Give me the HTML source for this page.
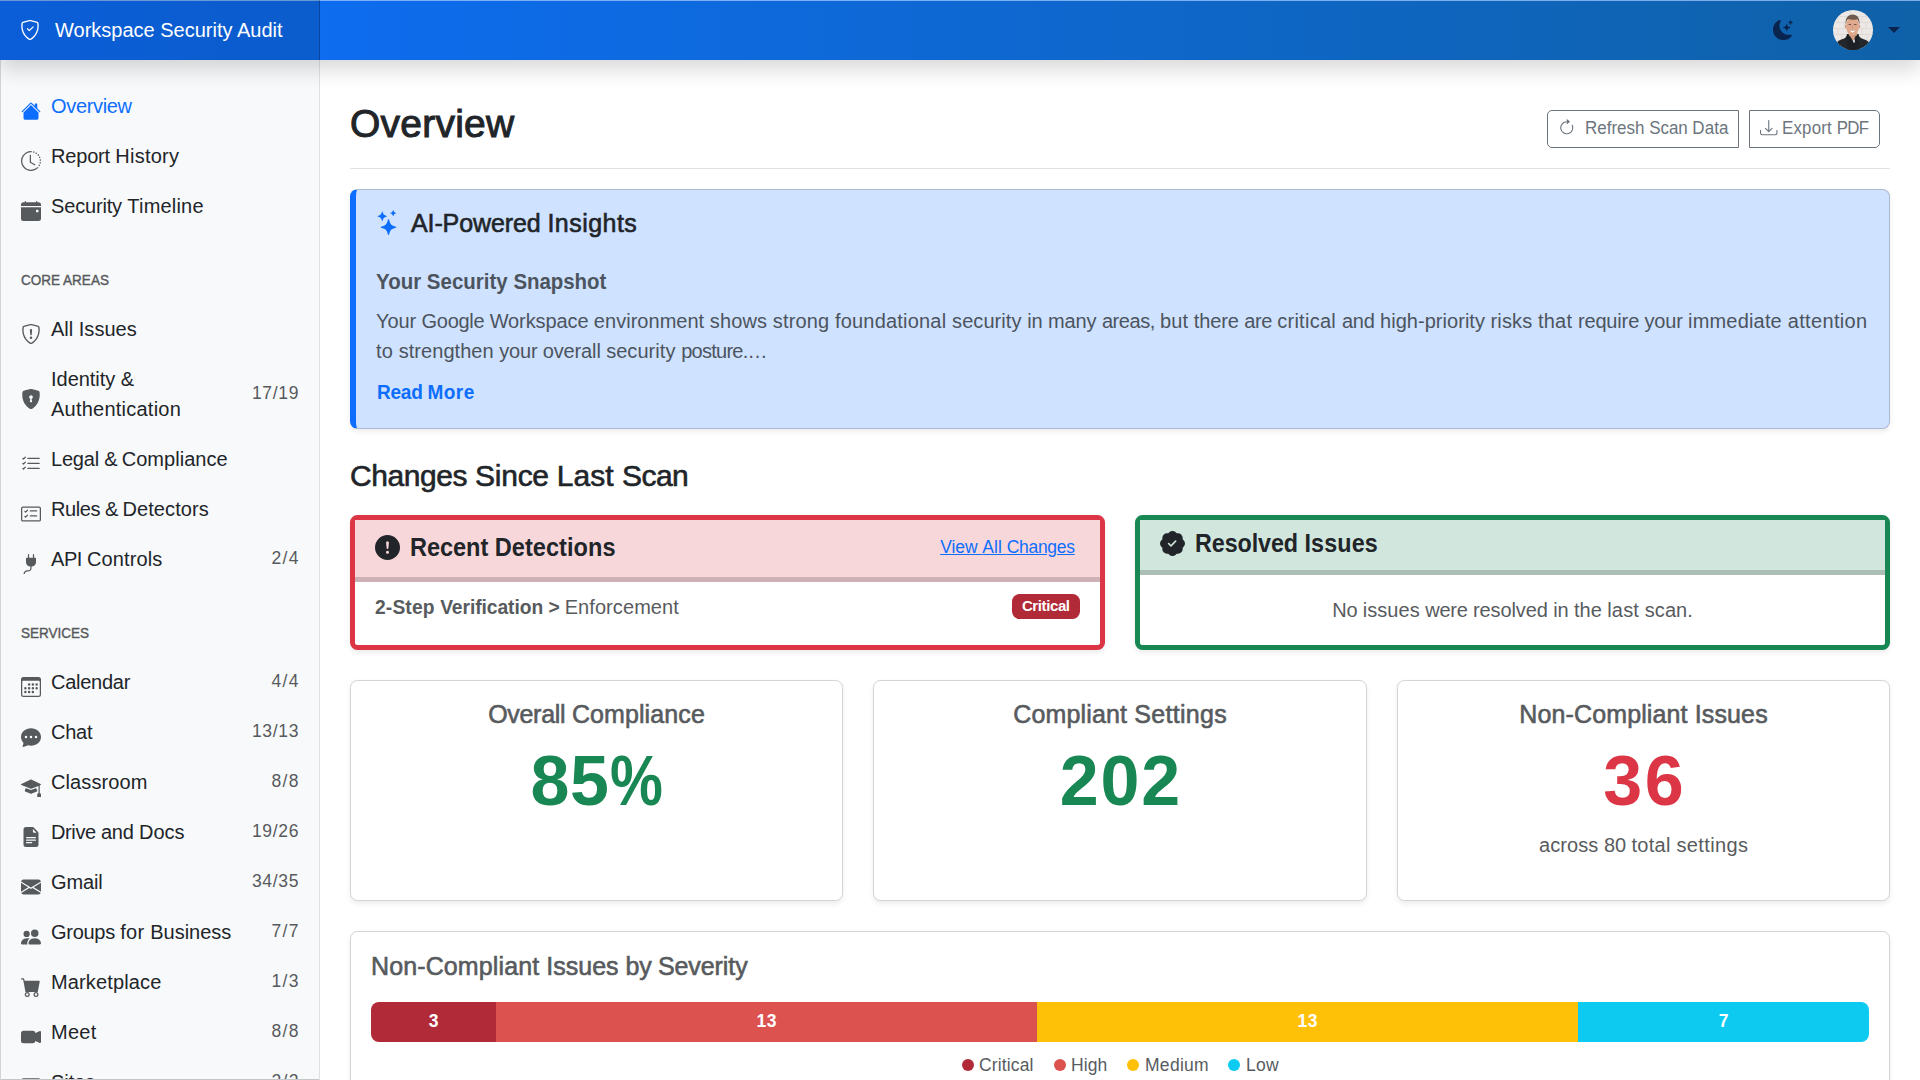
<!DOCTYPE html>
<html lang="en">
<head>
<meta charset="utf-8">
<title>Workspace Security Audit</title>
<style>
*{box-sizing:border-box}
html,body{margin:0;padding:0}
body{width:1920px;height:1080px;overflow:hidden;background:#fff;color:#212529;font-family:"Liberation Sans",sans-serif;font-size:20px;line-height:30px;position:relative}
svg{display:block}
.t{white-space:nowrap;display:inline-block}

/* ---------- top bar ---------- */
.topbar{position:absolute;left:0;top:0;width:1920px;height:60px;background:linear-gradient(90deg,#0d6efd 0%,#0f62a8 100%);box-shadow:0 10px 20px rgba(0,0,0,.15);z-index:10}
.topbar:before{content:"";position:absolute;left:0;top:0;width:100%;height:1px;background:rgba(160,200,255,.75)}
.brand{position:absolute;left:0;top:0;width:320px;height:60px;background:rgba(0,0,0,.145);box-shadow:inset -1px 0 0 rgba(0,0,0,.22);color:#fff;font-size:20px}
.brand svg{position:absolute;left:20px;top:20px;width:20px;height:20px;fill:#fff}
.brand .t{position:absolute;left:55px;top:15px;line-height:30px}
.moon{position:absolute;left:1773px;top:20px;width:20px;height:20px;fill:#0a2450}
.avatar{position:absolute;left:1833px;top:10px;width:40px;height:40px;border-radius:50%;overflow:hidden}
.caret{position:absolute;left:1888px;top:27px;width:0;height:0;border-left:6px solid transparent;border-right:6px solid transparent;border-top:6px solid #0a2450}

/* ---------- sidebar ---------- */
.sidebar{position:absolute;left:0;top:60px;width:320px;height:1020px;background:#f8f9fa;border-right:1px solid #dee2e6;border-left:1px solid #d2d4d7;overflow:hidden}
.sidebar:after{content:"";position:absolute;left:0;bottom:0;width:100%;height:1px;background:#c4c6c9}
.nav{position:absolute;left:0;width:318px;height:50px}
.nav svg{position:absolute;left:20px;top:17px;width:20px;height:20px;fill:#575a5d}
.nav .t{position:absolute;left:50px;top:8px;line-height:30px;color:#212529}
.nav .c{position:absolute;right:20.5px;top:8px;line-height:30px;font-size:17.5px;color:#575a5d;white-space:nowrap}
.nav.active svg{fill:#0d6efd}
.nav.active .t{color:#0d6efd}
.sh{position:absolute;left:20px;font-size:15px;line-height:20px;color:#575a5d;white-space:nowrap;-webkit-text-stroke:.4px #575a5d}

/* ---------- main ---------- */
.main{position:absolute;left:0;top:0;width:1920px;height:1080px;overflow:hidden}
.abs{position:absolute}
.h1{font-size:40px;line-height:48px;color:#212529}
.h1 .t{-webkit-text-stroke:1px #212529}
.h4{font-size:30px;line-height:36px;color:#212529}
.h4 .t{-webkit-text-stroke:.6px #212529}
.h5{font-size:25px;line-height:30px}
.h5 .t{-webkit-text-stroke:.6px currentColor}
.h5b{font-size:25px;line-height:30px;font-weight:700;color:#212529}
.btn{height:38px;border:1px solid #6c757d;border-radius:5px;color:#6c757d;font-size:17.5px;line-height:26px;background:#fff}
.btn svg{position:absolute;fill:#6c757d}
.btn .t{position:absolute;top:4.25px}
.ai{background:#cfe2ff;border:1px solid #abbad2;border-left:6px solid #0d6efd;border-radius:7.5px;box-shadow:0 2.5px 5px rgba(0,0,0,.075)}
.chg{border:5px solid;border-radius:7.5px;background:#fff;box-shadow:0 2.5px 5px rgba(0,0,0,.075)}
.chg .hd{position:absolute;left:0;top:0;right:0;border-bottom:5px solid}
.red{border-color:#dc3545}
.red .hd{background:#f8d7da;border-bottom-color:#cdb1b4}
.grn{border-color:#198754}
.grn .hd{background:#d1e7dd;border-bottom-color:#acbfb6}
.lnk{font-size:17.5px;line-height:30px;color:#0d6efd;text-decoration:underline}
.lnk .t{text-decoration:underline}
.badge{height:25px;padding:0 10px;border-radius:7.5px;background:#b02a37;color:#fff;font-size:15px;line-height:23px;font-weight:700}
.card{background:#fff;border:1px solid #d4d4d4;border-radius:7.5px;box-shadow:0 2.5px 5px rgba(0,0,0,.075)}
.ctr{left:0;width:100%;text-align:center}
.big{font-size:70px;line-height:84px;font-weight:700}
.bar{border-radius:8px;overflow:hidden}
.bar div{position:absolute;top:0;height:40px;text-align:center;color:#fff;font-size:17.5px;font-weight:700;line-height:39px}
.dot{width:12px;height:12px;border-radius:50%}
.lg{font-size:17.5px;line-height:30px;color:#585b5e}
/*LIB*/
.pct{display:inline-block;transform:scaleX(.85);transform-origin:0 50%;margin-right:-9.3px}
.h1{font-size:39px}
/*ENDLIB*/
/*REF*/
</style>
</head>
<body>

<div class="main" id="main">
<div class="abs h1" style="left:350px;top:100px"><span class="t" id="h1" style="margin-right:-0.241px"><span style="letter-spacing:0.241px">Overview</span></span></div>
<div class="abs btn" style="left:1547px;top:110px;width:192px;border-radius:5px 0 0 5px"><svg style="left:9.75px;top:7.75px;width:17.5px;height:17.5px" viewBox="0 0 16 16"><path fill-rule="evenodd" d="M8 3a5 5 0 1 0 4.546 2.914.5.5 0 0 1 .908-.417A6 6 0 1 1 8 2z"/><path fill-rule="evenodd" d="M8 4.466V.534a.25.25 0 0 1 .41-.192l2.36 1.966c.12.1.12.284 0 .384L8.41 4.658A.25.25 0 0 1 8 4.466"/></svg><span class="t" id="b-refresh" style="left:36.5px;transform:scaleX(0.9708);transform-origin:0 50%;margin-right:-0.124px">Refresh <span style="letter-spacing:-0.076px">Scan </span><span style="letter-spacing:0.124px">Data</span></span></div>
<div class="abs btn" style="left:1749px;top:110px;width:131px;border-radius:0 5px 5px 0"><svg style="left:10px;top:8px;width:17.5px;height:17.5px" viewBox="0 0 16 16"><path fill-rule="evenodd" d="M.5 9.9a.5.5 0 0 1 .5.5v2.5a1 1 0 0 0 1 1h12a1 1 0 0 0 1-1v-2.5a.5.5 0 0 1 1 0v2.5a2 2 0 0 1-2 2H2a2 2 0 0 1-2-2v-2.5a.5.5 0 0 1 .5-.5"/><path fill-rule="evenodd" d="M7.646 11.854a.5.5 0 0 0 .708 0l3-3a.5.5 0 0 0-.708-.708L8.5 10.293V1.5a.5.5 0 0 0-1 0v8.793L5.354 8.146a.5.5 0 1 0-.708.708z"/></svg><span class="t" id="b-export" style="left:31.5px;transform:scaleX(0.9626);transform-origin:0 50%;margin-right:0.776px"><span style="letter-spacing:0.221px">Export </span><span style="letter-spacing:-0.776px">PDF</span></span></div>
<div class="abs" style="left:350px;top:168px;width:1540px;height:1px;background:#dee2e6"></div>
<div class="abs ai" style="left:350px;top:189px;width:1540px;height:240px">
<svg style="position:absolute;left:20px;top:20px;width:25px;height:25px;fill:#0d6efd" viewBox="0 0 16 16"><path fill-rule="evenodd" d="M7.657 6.247c.11-.33.576-.33.686 0l.645 1.937a2.89 2.89 0 0 0 1.829 1.828l1.936.645c.33.11.33.576 0 .686l-1.937.645a2.89 2.89 0 0 0-1.828 1.829l-.645 1.936a.361.361 0 0 1-.686 0l-.645-1.937a2.89 2.89 0 0 0-1.828-1.828l-1.937-.645a.361.361 0 0 1 0-.686l1.937-.645a2.89 2.89 0 0 0 1.828-1.828zM3.794 1.148a.217.217 0 0 1 .412 0l.387 1.162c.173.518.579.924 1.097 1.097l1.162.387a.217.217 0 0 1 0 .412l-1.162.387A1.73 1.73 0 0 0 4.593 5.69l-.387 1.162a.217.217 0 0 1-.412 0L3.407 5.69A1.73 1.73 0 0 0 2.31 4.593l-1.162-.387a.217.217 0 0 1 0-.412l1.162-.387A1.73 1.73 0 0 0 3.407 2.31zM10.863.099a.145.145 0 0 1 .274 0l.258.774c.115.346.386.617.732.732l.774.258a.145.145 0 0 1 0 .274l-.774.258a1.16 1.16 0 0 0-.732.732l-.258.774a.145.145 0 0 1-.274 0l-.258-.774a1.16 1.16 0 0 0-.732-.732L9.1 2.137a.145.145 0 0 1 0-.274l.774-.258c.346-.115.617-.386.732-.732z"/></svg>
<div class="abs h5" style="left:55px;top:18px;color:#212529"><span class="t" id="ai-title" style="margin-right:-0.476px"><span style="letter-spacing:-0.108px">AI-Powered </span><span style="letter-spacing:0.476px">Insights</span></span></div>
<div class="abs" style="left:20px;top:79.25px;font-size:21.875px;line-height:26px;font-weight:700;color:#4c545e"><span class="t" id="ai-sub" style="transform:scaleX(0.9355);transform-origin:0 50%;margin-right:0.038px"><span style="letter-spacing:0.025px">Your </span><span style="letter-spacing:0.016px">Security </span><span style="letter-spacing:-0.038px">Snapshot</span></span></div>
<div class="abs" style="left:20px;top:116px;color:#4c545e"><span class="t" id="ai-p1" style="margin-right:-0.342px"><span style="letter-spacing:-0.085px">Your </span><span style="letter-spacing:-0.28px">Google </span><span style="letter-spacing:-0.101px">Workspace </span><span style="letter-spacing:0.025px">environment </span><span style="letter-spacing:0.134px">shows </span><span style="letter-spacing:0.134px">strong </span><span style="letter-spacing:0.2px">foundational </span><span style="letter-spacing:0.062px">security </span><span style="letter-spacing:-0.086px">in </span><span style="letter-spacing:-0.116px">many </span><span style="letter-spacing:-0.425px">areas, </span><span style="letter-spacing:0.099px">but </span><span style="letter-spacing:-0.138px">there </span><span style="letter-spacing:-0.357px">are </span><span style="letter-spacing:0.272px">critical </span><span style="letter-spacing:-0.191px">and </span><span style="letter-spacing:0.035px">high-priority </span><span style="letter-spacing:0.119px">risks </span><span style="letter-spacing:0.204px">that </span><span style="letter-spacing:-0.151px">require </span><span style="letter-spacing:-0.196px">your </span><span style="letter-spacing:0.186px">immediate </span><span style="letter-spacing:0.342px">attention</span></span></div>
<div class="abs" style="left:20px;top:146px;color:#4c545e"><span class="t" id="ai-p2" style="margin-right:0.736px"><span style="letter-spacing:0.16px">to </span><span style="letter-spacing:0.04px">strengthen </span><span style="letter-spacing:-0.195px">your </span><span style="letter-spacing:-0.137px">overall </span><span style="letter-spacing:0.063px">security </span><span style="letter-spacing:-0.736px">posture.&hellip;</span></span></div>
<div class="abs" style="left:21px;top:187px;font-weight:700;color:#0d6efd"><span class="t" id="ai-more" style="transform:scaleX(0.9515);transform-origin:0 50%;margin-right:-0.446px"><span style="letter-spacing:-0.268px">Read </span><span style="letter-spacing:0.446px">More</span></span></div>
</div>
<div class="abs h4" style="left:350px;top:458px"><span class="t" id="h4" style="margin-right:0.562px"><span style="letter-spacing:-0.416px">Changes </span><span style="letter-spacing:-0.281px">Since </span><span style="letter-spacing:0.044px">Last </span><span style="letter-spacing:-0.562px">Scan</span></span></div>
<div class="abs chg red" style="left:350px;top:515px;width:755px;height:135px">
<div class="hd" style="height:62px"><svg style="position:absolute;left:20px;top:15px;width:25px;height:25px;fill:#212529" viewBox="0 0 16 16"><path fill-rule="evenodd" d="M16 8A8 8 0 1 1 0 8a8 8 0 0 1 16 0M8 4a.905.905 0 0 0-.9.995l.35 3.507a.552.552 0 0 0 1.1 0l.35-3.507A.905.905 0 0 0 8 4m.002 6a1 1 0 1 0 0 2 1 1 0 0 0 0-2"/></svg><div class="abs h5b" style="left:55px;top:12px"><span class="t" id="rd-title" style="transform:scaleX(0.9422);transform-origin:0 50%;margin-right:-0.042px"><span style="letter-spacing:-0.054px">Recent </span><span style="letter-spacing:0.042px">Detections</span></span></div><div class="abs lnk" style="right:25px;top:12px"><span class="t" id="rd-link" style="margin-right:0.283px"><span style="letter-spacing:-0.062px">View </span><span style="letter-spacing:-0.011px">All </span><span style="letter-spacing:-0.283px">Changes</span></span></div></div>
<div class="abs" style="left:20px;top:72px;color:#585b5e;font-weight:700"><span class="t" id="rd-a" style="transform:scaleX(0.9633);transform-origin:0 50%;margin-right:1.014px"><span style="letter-spacing:0.132px">2-Step </span><span style="letter-spacing:-0.074px">Verification </span><span style="letter-spacing:-1.014px">&gt;</span></span></div>
<div class="abs" style="left:209.66px;top:72px;color:#585b5e"><span class="t" id="rd-b" style="margin-right:-0.078px"><span style="letter-spacing:0.078px">Enforcement</span></span></div>
<div class="abs badge" style="right:20px;top:74px"><span class="t" id="rd-badge" style="margin-right:0.388px"><span style="letter-spacing:-0.388px">Critical</span></span></div>
</div>
<div class="abs chg grn" style="left:1135px;top:515px;width:755px;height:135px">
<div class="hd" style="height:55px"><svg style="position:absolute;left:20px;top:11px;width:25px;height:25px;fill:#212529" viewBox="0 0 16 16"><path fill-rule="evenodd" d="M10.067.87a2.89 2.89 0 0 0-4.134 0l-.622.638-.89-.011a2.89 2.89 0 0 0-2.924 2.924l.01.89-.636.622a2.89 2.89 0 0 0 0 4.134l.637.622-.011.89a2.89 2.89 0 0 0 2.924 2.924l.89-.01.622.636a2.89 2.89 0 0 0 4.134 0l.622-.637.89.011a2.89 2.89 0 0 0 2.924-2.924l-.01-.89.636-.622a2.89 2.89 0 0 0 0-4.134l-.637-.622.011-.89a2.89 2.89 0 0 0-2.924-2.924l-.89.01zm.287 5.984-3 3a.5.5 0 0 1-.708 0l-1.5-1.5a.5.5 0 1 1 .708-.708L7 8.793l2.646-2.647a.5.5 0 0 1 .708.708"/></svg><div class="abs h5b" style="left:55px;top:8px"><span class="t" id="ri-title" style="transform:scaleX(0.9325);transform-origin:0 50%;margin-right:-0.163px"><span style="letter-spacing:-0.09px">Resolved </span><span style="letter-spacing:0.163px">Issues</span></span></div></div>
<div class="abs" style="left:0;width:745px;top:75px;text-align:center;color:#585b5e"><span class="t" id="ri-none" style="margin-right:-0.046px"><span style="letter-spacing:-0.163px">No </span><span style="letter-spacing:0.025px">issues </span><span style="letter-spacing:-0.223px">were </span><span style="letter-spacing:-0.106px">resolved </span><span style="letter-spacing:-0.085px">in </span><span style="letter-spacing:-0.059px">the </span><span style="letter-spacing:0.178px">last </span><span style="letter-spacing:0.046px">scan.</span></span></div>
</div>
<div class="abs card" style="left:350px;top:680px;width:493px;height:221px"><div class="abs h5 ctr" style="top:18px;color:#585b5e"><span class="t" id="s-oc-t" style="margin-right:-0.1px"><span style="letter-spacing:-0.306px">Overall </span><span style="letter-spacing:0.1px">Compliance</span></span></div><div class="abs big ctr" style="top:58px;color:#198754"><span class="t" id="s-oc-n" style="letter-spacing:0.625px;margin-right:-0.625px">85<span class="pct">%</span></span></div></div>
<div class="abs card" style="left:873px;top:680px;width:494px;height:221px"><div class="abs h5 ctr" style="top:18px;color:#585b5e"><span class="t" id="s-cs-t" style="margin-right:-0.31px"><span style="letter-spacing:0.151px">Compliant </span><span style="letter-spacing:0.31px">Settings</span></span></div><div class="abs big ctr" style="top:58px;color:#198754"><span class="t" id="s-cs-n" style="margin-right:-1.846px"><span style="letter-spacing:1.846px">202</span></span></div></div>
<div class="abs card" style="left:1397px;top:680px;width:493px;height:221px"><div class="abs h5 ctr" style="top:18px;color:#585b5e"><span class="t" id="s-nc-t" style="margin-right:-0.144px"><span style="letter-spacing:0.119px">Non-Compliant </span><span style="letter-spacing:0.144px">Issues</span></span></div><div class="abs big ctr" style="top:58px;color:#dc3545"><span class="t" id="s-nc-n" style="margin-right:-2.461px"><span style="letter-spacing:2.461px">36</span></span></div><div class="abs ctr" style="top:149px;color:#585b5e"><span class="t" id="s-nc-s" style="margin-right:-0.364px"><span style="letter-spacing:0.068px">across </span><span style="letter-spacing:-0.12px">80 </span><span style="letter-spacing:0.273px">total </span><span style="letter-spacing:0.364px">settings</span></span></div></div>
<div class="abs card" style="left:350px;top:931px;width:1540px;height:220px">
<div class="abs h5" style="left:20px;top:19px;color:#585b5e"><span class="t" id="sev-title" style="margin-right:0.075px"><span style="letter-spacing:0.119px">Non-Compliant </span>Issues <span style="letter-spacing:-0.326px">by </span><span style="letter-spacing:-0.075px">Severity</span></span></div>
<div class="abs bar" style="left:20px;top:70px;width:1498px;height:40px"><div style="left:0;width:125px;background:#b02a37"><span class="t" id="bar-1" style="margin-right:-0.308px"><span style="letter-spacing:0.308px">3</span></span></div><div style="left:125px;width:541px;background:#dc524f"><span class="t" id="bar-2" style="margin-right:-0.615px"><span style="letter-spacing:0.615px">13</span></span></div><div style="left:666px;width:541px;background:#ffc107"><span class="t" id="bar-3" style="margin-right:-0.615px"><span style="letter-spacing:0.615px">13</span></span></div><div style="left:1207px;width:291px;background:#0dcaf0"><span class="t" id="bar-4" style="margin-right:-0.308px"><span style="letter-spacing:0.308px">7</span></span></div></div>
<div class="abs dot" style="left:611px;top:127px;background:#b02a37"></div>
<div class="abs lg" style="left:628px;top:118px"><span class="t" id="lg-c" style="margin-right:-0.145px"><span style="letter-spacing:0.145px">Critical</span></span></div>
<div class="abs dot" style="left:703px;top:127px;background:#dc524f"></div>
<div class="abs lg" style="left:720px;top:118px"><span class="t" id="lg-h" style="margin-right:-0.071px"><span style="letter-spacing:0.071px">High</span></span></div>
<div class="abs dot" style="left:776px;top:127px;background:#ffc107"></div>
<div class="abs lg" style="left:794px;top:118px"><span class="t" id="lg-m" style="margin-right:-0.287px"><span style="letter-spacing:0.287px">Medium</span></span></div>
<div class="abs dot" style="left:877px;top:127px;background:#0dcaf0"></div>
<div class="abs lg" style="left:895px;top:118px"><span class="t" id="lg-l" style="margin-right:-0.226px"><span style="letter-spacing:0.226px">Low</span></span></div>
</div>
</div>

<div class="sidebar" id="sidebar">
<div class="nav active" style="top:21px;height:50px"><svg style="top:20.0px" viewBox="0 0 16 16"><path fill-rule="evenodd" d="M8.707 1.5a1 1 0 0 0-1.414 0L.646 8.146a.5.5 0 0 0 .708.708L8 2.207l6.646 6.647a.5.5 0 0 0 .708-.708L13 5.793V2.5a.5.5 0 0 0-.5-.5h-1a.5.5 0 0 0-.5.5v1.293z"/><path fill-rule="evenodd" d="m8 3.293 6 6V13.5a1.5 1.5 0 0 1-1.5 1.5h-9A1.5 1.5 0 0 1 2 13.5V9.293z"/></svg><span class="t" id="n-overview" style="top:10px;margin-right:0.326px"><span style="letter-spacing:-0.326px">Overview</span></span></div>
<div class="nav" style="top:71px;height:50px"><svg style="top:20.0px" viewBox="0 0 16 16"><path fill-rule="evenodd" d="M8.515 1.019A7 7 0 0 0 8 1V0a8 8 0 0 1 .589.022zm2.004.45a7 7 0 0 0-.985-.299l.219-.976q.576.129 1.126.342zm1.37.71a7 7 0 0 0-.439-.27l.493-.87a8 8 0 0 1 .979.654l-.615.789a7 7 0 0 0-.418-.302zm1.834 1.79a7 7 0 0 0-.653-.796l.724-.69q.406.429.747.91zm.744 1.352a7 7 0 0 0-.214-.468l.893-.45a8 8 0 0 1 .45 1.088l-.95.313a7 7 0 0 0-.179-.483m.53 2.507a7 7 0 0 0-.1-1.025l.985-.17q.1.58.116 1.17zm-.131 1.538q.05-.254.081-.51l.993.123a8 8 0 0 1-.23 1.155l-.964-.267q.069-.247.12-.501m-.952 2.379q.276-.436.486-.908l.914.405q-.24.54-.555 1.038zm-.964 1.205q.183-.183.35-.378l.758.653a8 8 0 0 1-.401.432z"/><path fill-rule="evenodd" d="M8 1a7 7 0 1 0 4.95 11.95l.707.707A8.001 8.001 0 1 1 8 0z"/><path fill-rule="evenodd" d="M7.5 3a.5.5 0 0 1 .5.5v5.21l3.248 1.856a.5.5 0 0 1-.496.868l-3.5-2A.5.5 0 0 1 7 9V3.5a.5.5 0 0 1 .5-.5"/></svg><span class="t" id="n-reporthistory" style="top:10px;margin-right:-0.233px"><span style="letter-spacing:-0.179px">Report </span><span style="letter-spacing:0.233px">History</span></span></div>
<div class="nav" style="top:121px;height:50px"><svg style="top:20.0px" viewBox="0 0 16 16"><path fill-rule="evenodd" d="M4 .5a.5.5 0 0 0-1 0V1H2a2 2 0 0 0-2 2v1h16V3a2 2 0 0 0-2-2h-1V.5a.5.5 0 0 0-1 0V1H4zM16 14V5H0v9a2 2 0 0 0 2 2h12a2 2 0 0 0 2-2m-3.5-7h1a.5.5 0 0 1 .5.5v1a.5.5 0 0 1-.5.5h-1a.5.5 0 0 1-.5-.5v-1a.5.5 0 0 1 .5-.5"/></svg><span class="t" id="n-securitytimeline" style="top:10px;margin-right:-0.187px"><span style="letter-spacing:-0.161px">Security </span><span style="letter-spacing:0.187px">Timeline</span></span></div>
<div class="sh" style="top:210.3px"><span class="t" id="sh-core" style="transform:scaleX(0.9014);transform-origin:0 50%">CORE AREAS</span></div>
<div class="nav" style="top:244px;height:50px"><svg style="top:20.0px" viewBox="0 0 16 16"><path fill-rule="evenodd" d="M5.338 1.59a61 61 0 0 0-2.837.856.48.48 0 0 0-.328.39c-.554 4.157.726 7.19 2.253 9.188a10.7 10.7 0 0 0 2.287 2.233c.346.244.652.42.893.533q.18.085.293.118a1 1 0 0 0 .101.025 1 1 0 0 0 .1-.025q.114-.034.294-.118c.24-.113.547-.29.893-.533a10.7 10.7 0 0 0 2.287-2.233c1.527-1.997 2.807-5.031 2.253-9.188a.48.48 0 0 0-.328-.39c-.651-.213-1.75-.56-2.837-.855C9.552 1.29 8.531 1.067 8 1.067c-.53 0-1.552.223-2.662.524zM5.072.56C6.157.265 7.31 0 8 0s1.843.265 2.928.56c1.11.3 2.229.655 2.887.87a1.54 1.54 0 0 1 1.044 1.262c.596 4.477-.787 7.795-2.465 9.99a11.8 11.8 0 0 1-2.517 2.453 7 7 0 0 1-1.048.625c-.28.132-.581.24-.829.24s-.548-.108-.829-.24a7 7 0 0 1-1.048-.625 11.8 11.8 0 0 1-2.517-2.453C1.928 10.487.545 7.169 1.141 2.692A1.54 1.54 0 0 1 2.185 1.43 63 63 0 0 1 5.072.56"/><path fill-rule="evenodd" d="M7.001 11a1 1 0 1 1 2 0 1 1 0 0 1-2 0M7.1 4.995a.905.905 0 1 1 1.8 0l-.35 3.507a.553.553 0 0 1-1.1 0z"/></svg><span class="t" id="n-allissues" style="top:10px;margin-right:-0.047px"><span style="letter-spacing:-0.012px">All </span><span style="letter-spacing:0.047px">Issues</span></span></div>
<div class="nav" style="top:294px;height:80px"><svg style="top:35.0px" viewBox="0 0 16 16"><path fill-rule="evenodd" d="M8 0c-.69 0-1.843.265-2.928.56-1.11.3-2.229.655-2.887.87a1.54 1.54 0 0 0-1.044 1.262c-.596 4.477.787 7.795 2.465 9.99a11.8 11.8 0 0 0 2.517 2.453c.386.273.744.482 1.048.625.28.132.581.24.829.24s.548-.108.829-.24a7 7 0 0 0 1.048-.625 11.8 11.8 0 0 0 2.517-2.453c1.678-2.195 3.061-5.513 2.465-9.99a1.54 1.54 0 0 0-1.044-1.263 63 63 0 0 0-2.887-.87C9.843.266 8.69 0 8 0m0 5a1.5 1.5 0 0 1 .5 2.915l.385 1.99a.5.5 0 0 1-.491.595h-.788a.5.5 0 0 1-.49-.595l.384-1.99A1.5 1.5 0 0 1 8 5"/></svg><span class="t" id="n-identity1" style="top:10px;margin-right:1.0px"><span style="letter-spacing:-0.024px">Identity </span><span style="letter-spacing:-1.0px">&amp;</span></span><span class="t" id="n-identity2" style="top:40px;margin-right:-0.233px"><span style="letter-spacing:0.233px">Authentication</span></span><span class="c" id="c-identity" style="top:24.0px;letter-spacing:0.692px;right:19.808px">17/19</span></div>
<div class="nav" style="top:374px;height:50px"><svg style="top:20.0px" viewBox="0 0 16 16"><path fill-rule="evenodd" d="M5 11.5a.5.5 0 0 1 .5-.5h9a.5.5 0 0 1 0 1h-9a.5.5 0 0 1-.5-.5m0-4a.5.5 0 0 1 .5-.5h9a.5.5 0 0 1 0 1h-9a.5.5 0 0 1-.5-.5m0-4a.5.5 0 0 1 .5-.5h9a.5.5 0 0 1 0 1h-9a.5.5 0 0 1-.5-.5M3.854 2.146a.5.5 0 0 1 0 .708l-1.5 1.5a.5.5 0 0 1-.708 0l-.5-.5a.5.5 0 1 1 .708-.708L2 3.293l1.146-1.147a.5.5 0 0 1 .708 0m0 4a.5.5 0 0 1 0 .708l-1.5 1.5a.5.5 0 0 1-.708 0l-.5-.5a.5.5 0 1 1 .708-.708L2 7.293l1.146-1.147a.5.5 0 0 1 .708 0m0 4a.5.5 0 0 1 0 .708l-1.5 1.5a.5.5 0 0 1-.708 0l-.5-.5a.5.5 0 0 1 .708-.708l.146.147 1.146-1.147a.5.5 0 0 1 .708 0"/></svg><span class="t" id="n-legal" style="top:10px;margin-right:-0.035px"><span style="letter-spacing:-0.197px">Legal </span><span style="letter-spacing:-0.747px">&amp; </span><span style="letter-spacing:0.035px">Compliance</span></span></div>
<div class="nav" style="top:424px;height:50px"><svg style="top:20.0px" viewBox="0 0 16 16"><path fill-rule="evenodd" d="M14.5 3a.5.5 0 0 1 .5.5v9a.5.5 0 0 1-.5.5h-13a.5.5 0 0 1-.5-.5v-9a.5.5 0 0 1 .5-.5zm-13-1A1.5 1.5 0 0 0 0 3.5v9A1.5 1.5 0 0 0 1.5 14h13a1.5 1.5 0 0 0 1.5-1.5v-9A1.5 1.5 0 0 0 14.5 2z"/><path fill-rule="evenodd" d="M7 5.5a.5.5 0 0 1 .5-.5h5a.5.5 0 0 1 0 1h-5a.5.5 0 0 1-.5-.5m-1.496-.854a.5.5 0 0 1 0 .708l-1.5 1.5a.5.5 0 0 1-.708 0l-.5-.5a.5.5 0 1 1 .708-.708l.146.147 1.146-1.147a.5.5 0 0 1 .708 0M7 9.5a.5.5 0 0 1 .5-.5h5a.5.5 0 0 1 0 1h-5a.5.5 0 0 1-.5-.5m-1.496-.854a.5.5 0 0 1 0 .708l-1.5 1.5a.5.5 0 0 1-.708 0l-.5-.5a.5.5 0 0 1 .708-.708l.146.147 1.146-1.147a.5.5 0 0 1 .708 0"/></svg><span class="t" id="n-rules" style="top:10px;margin-right:-0.077px"><span style="letter-spacing:-0.431px">Rules </span><span style="letter-spacing:-0.747px">&amp; </span><span style="letter-spacing:0.077px">Detectors</span></span></div>
<div class="nav" style="top:474px;height:50px"><svg style="top:20.0px" viewBox="0 0 16 16"><path fill-rule="evenodd" d="M6 0a.5.5 0 0 1 .5.5V3h3V.5a.5.5 0 0 1 1 0V3h1a.5.5 0 0 1 .5.5v3A3.5 3.5 0 0 1 8.5 10c-.002.434-.01.845-.04 1.22-.041.514-.126 1.003-.317 1.424a2.08 2.08 0 0 1-.97 1.028C6.725 13.9 6.169 14 5.5 14c-.998 0-1.61.33-1.974.718A1.92 1.92 0 0 0 3 16H2c0-.616.232-1.367.797-1.968C3.374 13.42 4.261 13 5.5 13c.581 0 .962-.088 1.218-.219.241-.123.4-.3.514-.55.121-.266.193-.621.23-1.09.027-.34.035-.718.037-1.141A3.5 3.5 0 0 1 4 6.5v-3a.5.5 0 0 1 .5-.5h1V.5A.5.5 0 0 1 6 0"/></svg><span class="t" id="n-apicontrols" style="top:10px;margin-right:-0.102px"><span style="letter-spacing:-0.432px">API </span><span style="letter-spacing:0.102px">Controls</span></span><span class="c" id="c-apicontrols" style="top:9.0px;letter-spacing:1.282px;right:19.218px">2/4</span></div>
<div class="sh" style="top:563.3px"><span class="t" id="sh-serv" style="transform:scaleX(0.9015);transform-origin:0 50%">SERVICES</span></div>
<div class="nav" style="top:597px;height:50px"><svg style="top:20.0px" viewBox="0 0 16 16"><path fill-rule="evenodd" d="M14 0H2a2 2 0 0 0-2 2v12a2 2 0 0 0 2 2h12a2 2 0 0 0 2-2V2a2 2 0 0 0-2-2M1 3.857C1 3.384 1.448 3 2 3h12c.552 0 1 .384 1 .857v10.286c0 .473-.448.857-1 .857H2c-.552 0-1-.384-1-.857z"/><path fill-rule="evenodd" d="M6.5 7a1 1 0 1 0 0-2 1 1 0 0 0 0 2m3 0a1 1 0 1 0 0-2 1 1 0 0 0 0 2m3 0a1 1 0 1 0 0-2 1 1 0 0 0 0 2m-9 3a1 1 0 1 0 0-2 1 1 0 0 0 0 2m3 0a1 1 0 1 0 0-2 1 1 0 0 0 0 2m3 0a1 1 0 1 0 0-2 1 1 0 0 0 0 2m3 0a1 1 0 1 0 0-2 1 1 0 0 0 0 2m-9 3a1 1 0 1 0 0-2 1 1 0 0 0 0 2m3 0a1 1 0 1 0 0-2 1 1 0 0 0 0 2m3 0a1 1 0 1 0 0-2 1 1 0 0 0 0 2"/></svg><span class="t" id="n-calendar" style="top:10px;margin-right:0.259px"><span style="letter-spacing:-0.259px">Calendar</span></span><span class="c" id="c-calendar" style="top:9.0px;letter-spacing:1.282px;right:19.218px">4/4</span></div>
<div class="nav" style="top:647px;height:50px"><svg style="top:20.0px" viewBox="0 0 16 16"><path fill-rule="evenodd" d="M16 8c0 3.866-3.582 7-8 7a9 9 0 0 1-2.347-.306c-.584.296-1.925.864-4.181 1.234-.2.032-.352-.176-.273-.362.354-.836.674-1.95.77-2.966C.744 11.37 0 9.76 0 8c0-3.866 3.582-7 8-7s8 3.134 8 7M5 8a1 1 0 1 0-2 0 1 1 0 0 0 2 0m4 0a1 1 0 1 0-2 0 1 1 0 0 0 2 0m3 1a1 1 0 1 0 0-2 1 1 0 0 0 0 2"/></svg><span class="t" id="n-chat" style="top:10px;margin-right:0.264px"><span style="letter-spacing:-0.264px">Chat</span></span><span class="c" id="c-chat" style="top:9.0px;letter-spacing:0.692px;right:19.808px">13/13</span></div>
<div class="nav" style="top:697px;height:50px"><svg style="top:20.0px" viewBox="0 0 16 16"><path fill-rule="evenodd" d="M8.211 2.047a.5.5 0 0 0-.422 0l-7.5 3.5a.5.5 0 0 0 .025.917l7.5 3a.5.5 0 0 0 .372 0L14 7.14V13a1 1 0 0 0-1 1v2h3v-2a1 1 0 0 0-1-1V6.739l.686-.275a.5.5 0 0 0 .025-.917z"/><path fill-rule="evenodd" d="M4.176 9.032a.5.5 0 0 0-.656.327l-.5 1.7a.5.5 0 0 0 .294.605l4.5 1.8a.5.5 0 0 0 .372 0l4.5-1.8a.5.5 0 0 0 .294-.605l-.5-1.7a.5.5 0 0 0-.656-.327L8 10.466z"/></svg><span class="t" id="n-classroom" style="top:10px;margin-right:-0.095px"><span style="letter-spacing:0.095px">Classroom</span></span><span class="c" id="c-classroom" style="top:9.0px;letter-spacing:1.282px;right:19.218px">8/8</span></div>
<div class="nav" style="top:747px;height:50px"><svg style="top:20.0px" viewBox="0 0 16 16"><path fill-rule="evenodd" d="M9.293 0H4a2 2 0 0 0-2 2v12a2 2 0 0 0 2 2h8a2 2 0 0 0 2-2V4.707A1 1 0 0 0 13.707 4L10 .293A1 1 0 0 0 9.293 0M9.5 3.5v-2l3 3h-2a1 1 0 0 1-1-1M4.5 9a.5.5 0 0 1 0-1h7a.5.5 0 0 1 0 1zM4 10.5a.5.5 0 0 1 .5-.5h7a.5.5 0 0 1 0 1h-7a.5.5 0 0 1-.5-.5m.5 2.5a.5.5 0 0 1 0-1h4a.5.5 0 0 1 0 1z"/></svg><span class="t" id="n-driveanddocs" style="top:10px;margin-right:0.081px"><span style="letter-spacing:-0.389px">Drive </span><span style="letter-spacing:-0.19px">and </span><span style="letter-spacing:-0.081px">Docs</span></span><span class="c" id="c-driveanddocs" style="top:9.0px;letter-spacing:0.692px;right:19.808px">19/26</span></div>
<div class="nav" style="top:797px;height:50px"><svg style="top:20.0px" viewBox="0 0 16 16"><path fill-rule="evenodd" d="M.05 3.555A2 2 0 0 1 2 2h12a2 2 0 0 1 1.95 1.555L8 8.414zM0 4.697v7.104l5.803-3.558zM6.761 8.83l-6.57 4.027A2 2 0 0 0 2 14h12a2 2 0 0 0 1.808-1.144l-6.57-4.027L8 9.586zm3.436-.586L16 11.801V4.697z"/></svg><span class="t" id="n-gmail" style="top:10px;margin-right:0.115px"><span style="letter-spacing:-0.115px">Gmail</span></span><span class="c" id="c-gmail" style="top:9.0px;letter-spacing:0.692px;right:19.808px">34/35</span></div>
<div class="nav" style="top:847px;height:50px"><svg style="top:20.0px" viewBox="0 0 16 16"><path fill-rule="evenodd" d="M7 14s-1 0-1-1 1-4 5-4 5 3 5 4-1 1-1 1zm4-6a3 3 0 1 0 0-6 3 3 0 0 0 0 6m-5.784 6A2.24 2.24 0 0 1 5 13c0-1.355.68-2.75 1.936-3.72A6.3 6.3 0 0 0 5 9c-4 0-5 3-5 4s1 1 1 1zM4.5 8a2.5 2.5 0 1 0 0-5 2.5 2.5 0 0 0 0 5"/></svg><span class="t" id="n-groupsforbusiness" style="top:10px;margin-right:0.027px"><span style="letter-spacing:-0.285px">Groups </span><span style="letter-spacing:0.3px">for </span><span style="letter-spacing:-0.027px">Business</span></span><span class="c" id="c-groupsforbusiness" style="top:9.0px;letter-spacing:1.282px;right:19.218px">7/7</span></div>
<div class="nav" style="top:897px;height:50px"><svg style="top:20.0px" viewBox="0 0 16 16"><path fill-rule="evenodd" d="M0 1.5A.5.5 0 0 1 .5 1H2a.5.5 0 0 1 .485.379L2.89 3H14.5a.5.5 0 0 1 .491.592l-1.5 8A.5.5 0 0 1 13 12H4a.5.5 0 0 1-.491-.408L2.01 3.607 1.61 2H.5a.5.5 0 0 1-.5-.5M5 12a2 2 0 1 0 0 4 2 2 0 0 0 0-4m7 0a2 2 0 1 0 0 4 2 2 0 0 0 0-4m-7 1a1 1 0 1 1 0 2 1 1 0 0 1 0-2m7 0a1 1 0 1 1 0 2 1 1 0 0 1 0-2"/></svg><span class="t" id="n-marketplace" style="top:10px;margin-right:-0.132px"><span style="letter-spacing:0.132px">Marketplace</span></span><span class="c" id="c-marketplace" style="top:9.0px;letter-spacing:1.282px;right:19.218px">1/3</span></div>
<div class="nav" style="top:947px;height:50px"><svg style="top:20.0px" viewBox="0 0 16 16"><path fill-rule="evenodd" d="M0 5a2 2 0 0 1 2-2h7.5a2 2 0 0 1 1.983 1.738l3.11-1.382A1 1 0 0 1 16 4.269v7.462a1 1 0 0 1-1.406.913l-3.111-1.382A2 2 0 0 1 9.5 13H2a2 2 0 0 1-2-2z"/></svg><span class="t" id="n-meet" style="top:10px;margin-right:-0.251px"><span style="letter-spacing:0.251px">Meet</span></span><span class="c" id="c-meet" style="top:9.0px;letter-spacing:1.282px;right:19.218px">8/8</span></div>
<div class="nav" style="top:997px;height:50px"><svg style="top:20.0px" viewBox="0 0 16 16"><path fill-rule="evenodd" d="M2.5 4a.5.5 0 1 0 0-1 .5.5 0 0 0 0 1m2-.5a.5.5 0 1 1-1 0 .5.5 0 0 1 1 0m1 .5a.5.5 0 1 0 0-1 .5.5 0 0 0 0 1"/><path fill-rule="evenodd" d="M2 1a2 2 0 0 0-2 2v10a2 2 0 0 0 2 2h12a2 2 0 0 0 2-2V3a2 2 0 0 0-2-2zm13 2v2H1V3a1 1 0 0 1 1-1h12a1 1 0 0 1 1 1M2 14a1 1 0 0 1-1-1V6h14v7a1 1 0 0 1-1 1z"/></svg><span class="t" id="n-sites" style="top:10px;margin-right:0.063px"><span style="letter-spacing:-0.063px">Sites</span></span><span class="c" id="c-sites" style="top:9.0px;letter-spacing:1.282px;right:19.218px">2/2</span></div>
</div>

<div class="topbar">
  <div class="brand">
    <svg viewBox="0 0 16 16"><path d="M5.338 1.59a61 61 0 0 0-2.837.856.48.48 0 0 0-.328.39c-.554 4.157.726 7.19 2.253 9.188a10.7 10.7 0 0 0 2.287 2.233c.346.244.652.42.893.533q.18.085.293.118a1 1 0 0 0 .101.025 1 1 0 0 0 .1-.025q.114-.034.294-.118c.24-.113.547-.29.893-.533a10.7 10.7 0 0 0 2.287-2.233c1.527-1.997 2.807-5.031 2.253-9.188a.48.48 0 0 0-.328-.39c-.651-.213-1.75-.56-2.837-.855C9.552 1.29 8.531 1.067 8 1.067c-.53 0-1.552.223-2.662.524zM5.072.56C6.157.265 7.31 0 8 0s1.843.265 2.928.56c1.11.3 2.229.655 2.887.87a1.54 1.54 0 0 1 1.044 1.262c.596 4.477-.787 7.795-2.465 9.99a11.8 11.8 0 0 1-2.517 2.453 7 7 0 0 1-1.048.625c-.28.132-.581.24-.829.24s-.548-.108-.829-.24a7 7 0 0 1-1.048-.625 11.8 11.8 0 0 1-2.517-2.453C1.928 10.487.545 7.169 1.141 2.692A1.54 1.54 0 0 1 2.185 1.43 63 63 0 0 1 5.072.56"/><path d="M10.854 5.146a.5.5 0 0 1 0 .708l-3 3a.5.5 0 0 1-.708 0l-1.5-1.5a.5.5 0 1 1 .708-.708L7.5 7.793l2.646-2.647a.5.5 0 0 1 .708 0"/></svg>
    <span class="t" id="t-brand">Workspace Security Audit</span>
  </div>
  <svg class="moon" viewBox="0 0 16 16"><path d="M6 .278a.77.77 0 0 1 .08.858 7.2 7.2 0 0 0-.878 3.46c0 4.021 3.278 7.277 7.318 7.277q.792-.001 1.533-.16a.79.79 0 0 1 .81.316.73.73 0 0 1-.031.893A8.35 8.35 0 0 1 8.344 16C3.734 16 0 12.286 0 7.71 0 4.266 2.114 1.312 5.124.06A.75.75 0 0 1 6 .278"/><path d="M10.794 3.148a.217.217 0 0 1 .412 0l.387 1.162c.173.518.579.924 1.097 1.097l1.162.387a.217.217 0 0 1 0 .412l-1.162.387a1.73 1.73 0 0 0-1.097 1.097l-.387 1.162a.217.217 0 0 1-.412 0l-.387-1.162A1.73 1.73 0 0 0 9.31 6.593l-1.162-.387a.217.217 0 0 1 0-.412l1.162-.387a1.73 1.73 0 0 0 1.097-1.097zM13.863.099a.145.145 0 0 1 .274 0l.258.774c.115.346.386.617.732.732l.774.258a.145.145 0 0 1 0 .274l-.774.258a1.16 1.16 0 0 0-.732.732l-.258.774a.145.145 0 0 1-.274 0l-.258-.774a1.16 1.16 0 0 0-.732-.732l-.774-.258a.145.145 0 0 1 0-.274l.774-.258c.346-.115.617-.386.732-.732z"/></svg>
  <div class="avatar"><svg viewBox="0 0 40 40" width="40" height="40"><rect width="40" height="40" fill="#ece8e6"/>
<g stroke="#ddd5d1" stroke-width=".7" fill="none"><path d="M0 6.500h40M0 12.500h40M0 18.500h40M0 24.500h40M0 30.500h40M5 6.500v6M17 .5v6M29 6.500v6M11 12.500v6M33 12.500v6M5 18.500v6M29 18.500v6M9 24.500v6M34 24.500v6"/></g>
<path d="M1 40C1.500 33 5 30.500 10 29c2.500-.8 3.600-2.500 4-5h11.500c.4 2.500 1.600 4 4 4.800C35 30.500 38.500 33 39 40z" fill="#23262a"/>
<path d="M15.300 21h8.600l.6 5.500-3.500 6-5-6z" fill="#cf9a80"/>
<path d="M14 24.200l3.200 2.300 3.600 6 .2 7.500h-7zM25.300 24.200l-3.200 2.600-1.300 5.700.2 7.500h5z" fill="#1d2024"/>
<path d="M19.800 30.200l1.800-.6.3 2.600-1.100.9z" fill="#e8e8e8"/>
<ellipse cx="12.900" cy="16.300" rx="1" ry="1.900" fill="#d09a82"/><ellipse cx="26.200" cy="16.300" rx="1" ry="1.900" fill="#d09a82"/>
<ellipse cx="19.500" cy="16.200" rx="6.500" ry="9.400" fill="#dfa98e"/>
<path d="M12.700 14.800c-.9-6.800 2.300-10.400 6.900-10.400s7.600 3.400 6.800 10.400c-.5-2.600-1-4.600-2.200-5.600-2.600.9-6.600.9-9.200-.1-1.300 1.100-1.900 3.100-2.300 5.700z" fill="#6c5a4f"/>
<path d="M15.600 14.500h2.600M21 14.500h2.600" stroke="#6a4c40" stroke-width=".9"/>
<path d="M17.200 20.300q2.400 1.200 4.800 0q-.6 2.200-2.400 2.200t-2.400-2.200z" fill="#fff"/>
<path d="M19.500 15.500v3.200" stroke="#c98f78" stroke-width=".8"/></svg></div>
  <div class="caret"></div>
</div>

</body>
</html>
